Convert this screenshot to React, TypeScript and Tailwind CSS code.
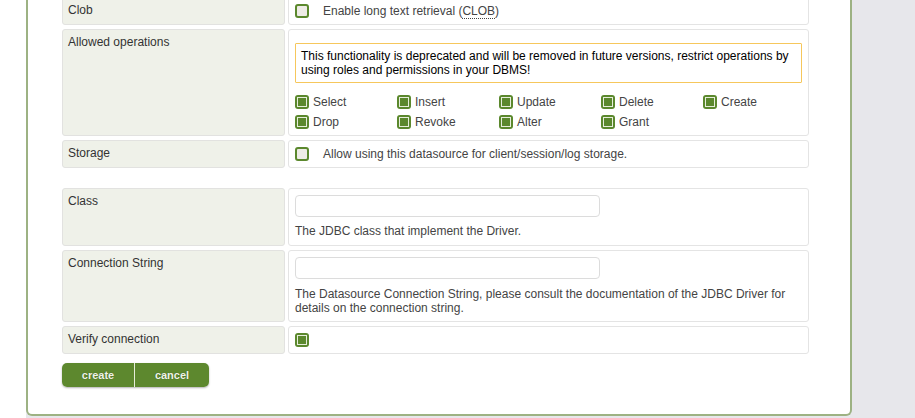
import React from "react";

const font = { fontFamily: '"Liberation Sans", Arial, sans-serif' };

function Box({ checked }: { checked?: boolean }) {
  return checked ? (
    <span className="inline-flex h-[14px] w-[14px] shrink-0 items-center justify-center rounded-[3px] bg-[#5b882d]">
      <span className="block h-[10px] w-[10px] border border-[#e6eedb] bg-[#5b882d]" />
    </span>
  ) : (
    <span className="inline-block h-[14px] w-[14px] shrink-0 rounded-[3px] border-2 border-[#5b882d] bg-[#eeece6]" />
  );
}

function Row({
  label,
  children,
  cls = "",
}: {
  label: string;
  children: React.ReactNode;
  cls?: string;
}) {
  return (
    <div className="flex gap-[3px]">
      <div className="w-[223px] shrink-0 rounded-[3px] border border-[#e2e2e0] bg-[#eff1e9] px-[5px] pt-[5px] pb-[4px] leading-[14px] text-[#333]">
        {label}
      </div>
      <div
        className={
          "w-[521px] shrink-0 rounded-[3px] border border-[#e4e4e4] bg-white px-[6px] text-[#444] " +
          cls
        }
      >
        {children}
      </div>
    </div>
  );
}

const ops = [
  "Select",
  "Insert",
  "Update",
  "Delete",
  "Create",
  "Drop",
  "Revoke",
  "Alter",
  "Grant",
];

export default function App() {
  return (
    <div
      className="flex h-[418px] w-[915px] overflow-hidden bg-[#e7e7eb] text-[12px]"
      style={font}
    >
      <div className="w-[26px] shrink-0 bg-white" />
      <div className="h-[416px] w-[826px] shrink-0 rounded-b-[6px] border-x-2 border-b-2 border-[#9db283] bg-white pl-[34px]">
        <div className="-mt-[3px] flex flex-col gap-[4px]">
          <Row label="Clob" cls="flex items-center h-[28px]">
            <Box />
            <span className="ml-[14px] leading-[14px]">
              Enable long text retrieval (
              <abbr className="no-underline border-b border-dotted border-[#444]">CLOB</abbr>)
            </span>
          </Row>
          <Row label="Allowed operations" cls="pt-[13px] pb-[6px]">
            <div className="rounded-[1px] border border-[#f6c75c] px-[5px] py-[5px] leading-[14px] text-black">
              This functionality is deprecated and will be removed in future versions,
              restrict operations by using roles and permissions in your DBMS!
            </div>
            <div className="mt-[12px] grid grid-cols-[102px_102px_102px_102px_102px] gap-y-[6px]">
              {ops.map((o) => (
                <div key={o} className="flex items-center gap-[4px] leading-[14px]">
                  <Box checked />
                  <span>{o}</span>
                </div>
              ))}
            </div>
          </Row>
          <Row label="Storage" cls="flex items-center h-[28px]">
            <Box />
            <span className="ml-[14px] leading-[14px]">
              Allow using this datasource for client/session/log storage.
            </span>
          </Row>
          <div className="h-[12px]" />
          <Row label="Class" cls="pt-[6px] pb-[7px]">
            <div className="h-[22px] w-[305px] rounded-[4px] border border-[#dcdcdc] bg-white" />
            <div className="mt-[7px] leading-[14px]">The JDBC class that implement the Driver.</div>
          </Row>
          <Row label="Connection String" cls="pt-[6px] pb-[6px]">
            <div className="h-[22px] w-[305px] rounded-[4px] border border-[#dcdcdc] bg-white" />
            <div className="mt-[8px] leading-[14px]">
              The Datasource Connection String, please consult the documentation of the JDBC
              Driver for details on the connection string.
            </div>
          </Row>
          <Row label="Verify connection" cls="flex items-center h-[28px]">
            <Box checked />
          </Row>
        </div>
        <div className="mt-[9px] flex">
          <div className="flex h-[24px] overflow-hidden rounded-[5px] shadow-[0_1px_2px_rgba(0,0,0,0.3)]">
            <button className="w-[72px] bg-[#5d882e] text-[11px] font-bold text-[#eef3e6] [text-shadow:0_0_1px_rgba(0,0,0,0.4)]">
              create
            </button>
            <div className="w-[1px] bg-[#e6edd9]" />
            <button className="w-[74px] bg-[#5d882e] text-[11px] font-bold text-[#eef3e6] [text-shadow:0_0_1px_rgba(0,0,0,0.4)]">
              cancel
            </button>
          </div>
        </div>
      </div>
    </div>
  );
}
